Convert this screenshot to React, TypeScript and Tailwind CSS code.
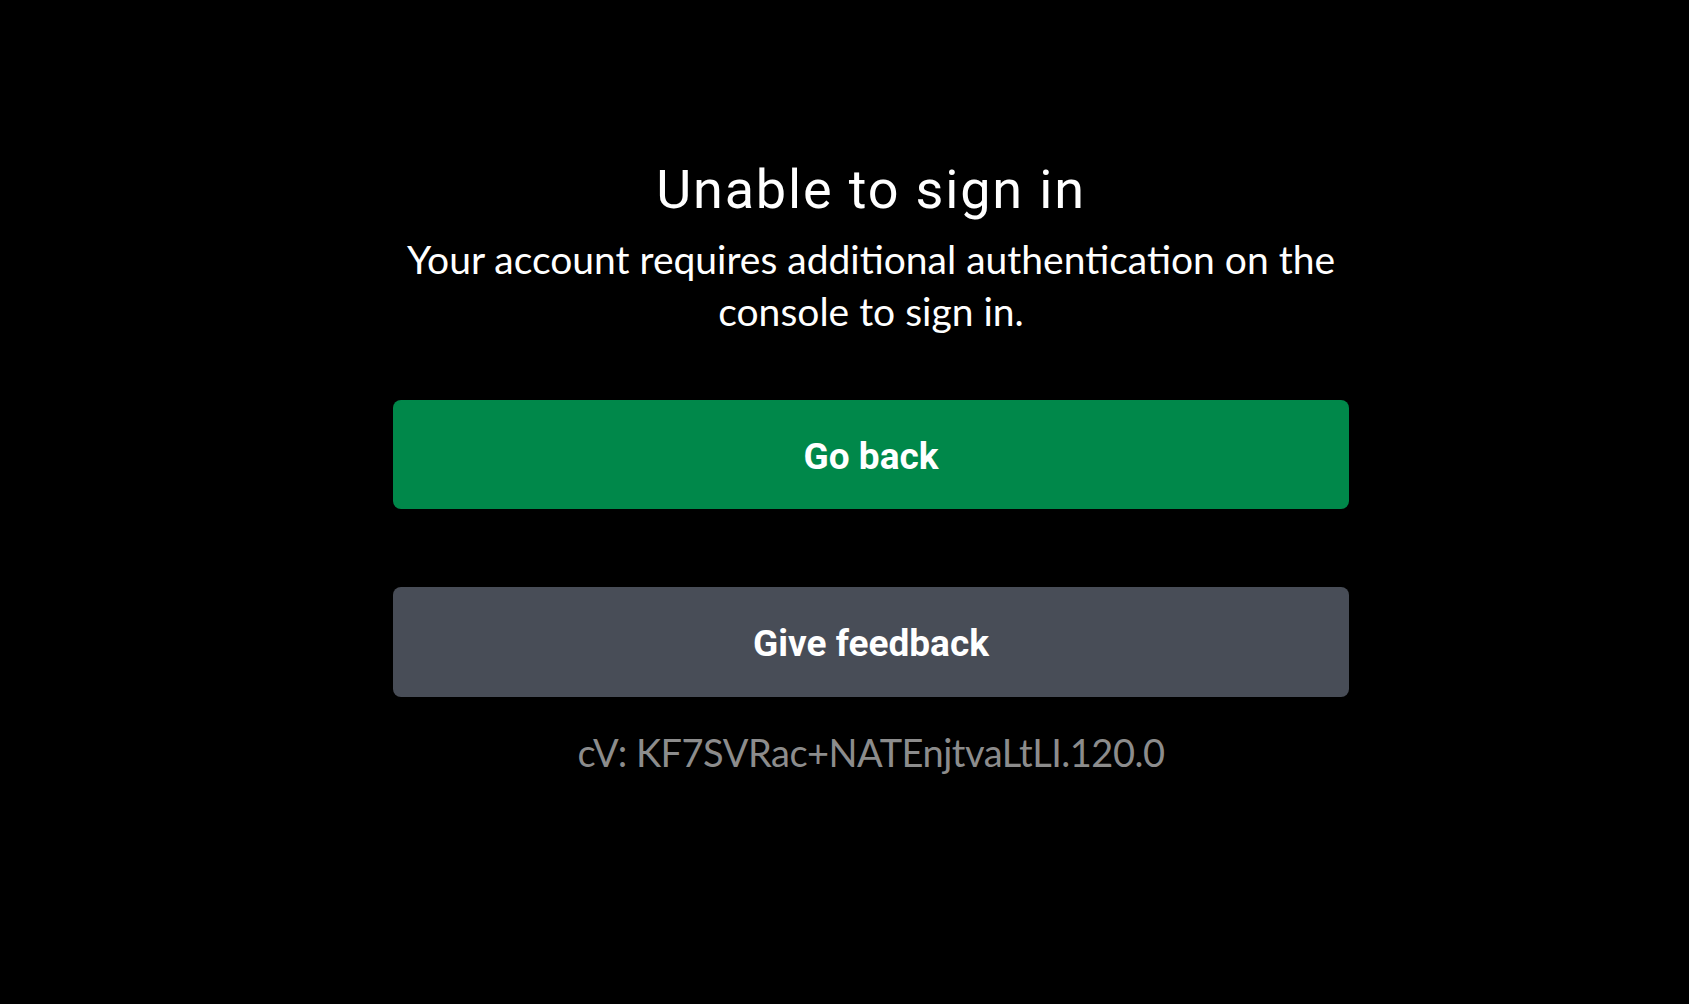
export default function App() {
  return (
    <div className="min-h-screen w-full bg-black flex justify-center pl-[53px] font-['Lato','Open_Sans',sans-serif]">
      <div className="w-[956px] flex flex-col items-center pt-[163px]">
        {/* Heading */}
        <h1 className="font-['Roboto','Liberation_Sans',sans-serif] text-[54px] leading-[54px] font-normal tracking-[0.034em] text-white">
          Unable to sign in
        </h1>
        <p className="mt-[16px] text-[39px] leading-[52px] text-white text-center">
          Your account requires additional authentication on the
          <br />
          console to sign in.
        </p>

        {/* Actions */}
        <button className="mt-[63px] w-full h-[109px] pt-[5px] rounded-[8px] bg-[#00884a] text-white text-[37px] font-bold font-['Roboto','Liberation_Sans',sans-serif]">
          Go back
        </button>
        <button className="mt-[78px] w-full h-[110px] pt-[4px] rounded-[8px] bg-[#484d57] text-white text-[37px] font-bold font-['Roboto','Liberation_Sans',sans-serif]">
          Give feedback
        </button>

        <p className="mt-[29px] text-[38px] leading-[52px] tracking-[-0.013em] text-[#8c8c8c]">
          cV: KF7SVRac+NATEnjtvaLtLI.120.0
        </p>
      </div>
    </div>
  )
}
